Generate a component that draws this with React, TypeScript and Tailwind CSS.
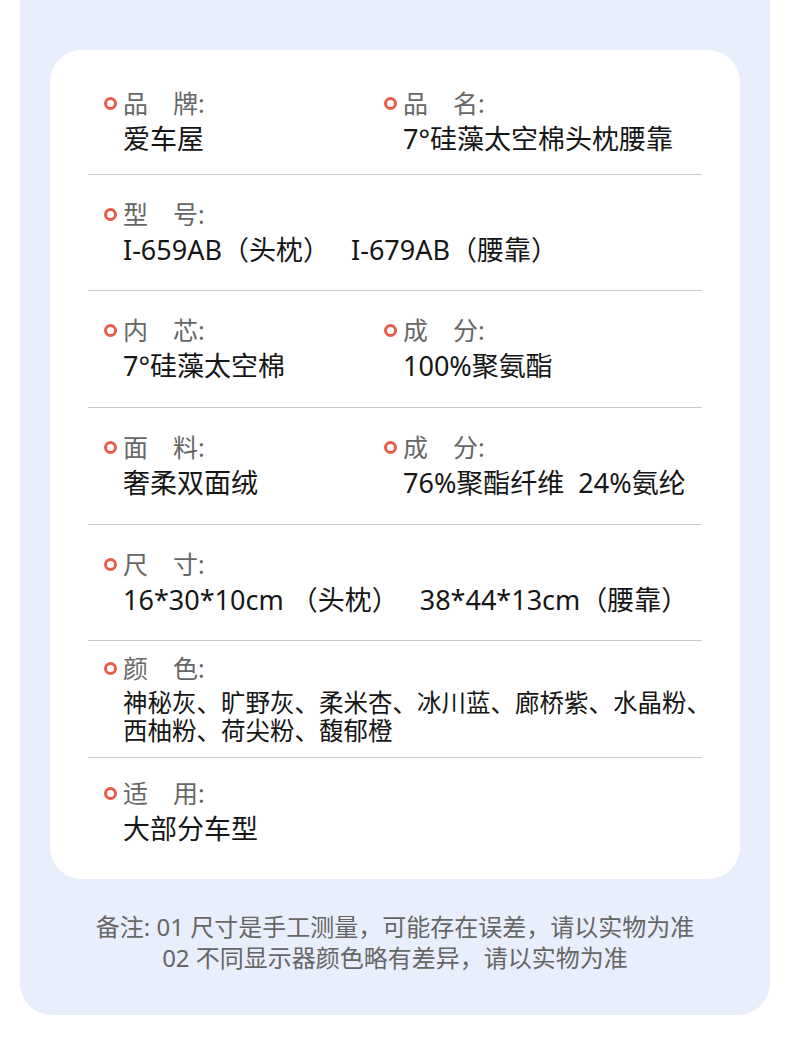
const Dot = () => (
  <span className="mr-[6px] inline-block h-[13px] w-[13px] shrink-0 rounded-full border-[3px] border-[#e95b49]" />
);

const Label = ({ text }: { text: string }) => (
  <div className="flex h-[32px] items-center text-[25px] leading-[32px] text-[#666666]">
    <Dot />
    <span>{text}</span>
  </div>
);

const Value = ({ children }: { children: React.ReactNode }) => (
  <div className="mt-[2px] pl-[19px] text-[27px] leading-[36px] text-[#161616] whitespace-pre">{children}</div>
);

type Field = { label: string; value: string };

const Row = ({ items, className }: { items: Field[]; className: string }) => (
  <div className={`grid grid-cols-[280px_1fr] border-b border-[#c9c9c9] pl-[16px] ${className}`}>
    {items.map((it) => (
      <div key={it.label} className={items.length === 1 ? "col-span-2" : ""}>
        <Label text={it.label} />
        <Value>{it.value}</Value>
      </div>
    ))}
  </div>
);

const App = () => {
  return (
    <div className="min-h-[1044px] bg-white" style={{ fontFamily: '"Noto Sans", "Noto Sans CJK SC", sans-serif' }}>
      <div className="mx-[20px] rounded-b-[32px] bg-[#e9eefc] pt-[50px] pb-[42px]">
        <div className="mx-[30px] rounded-[32px] bg-white px-[38px]">
          <Row
            className="pt-[37px] pb-[17px]"
            items={[
              { label: "品　牌:", value: "爱车屋" },
              { label: "品　名:", value: "7°硅藻太空棉头枕腰靠" },
            ]}
          />
          <Row className="pt-[23px] pb-[22px]" items={[{ label: "型　号:", value: "I-659AB（头枕）   I-679AB（腰靠）" }]} />
          <Row
            className="py-[23px]"
            items={[
              { label: "内　芯:", value: "7°硅藻太空棉" },
              { label: "成　分:", value: "100%聚氨酯" },
            ]}
          />
          <Row
            className="py-[23px]"
            items={[
              { label: "面　料:", value: "奢柔双面绒" },
              { label: "成　分:", value: "76%聚酯纤维  24%氨纶" },
            ]}
          />
          <Row className="pt-[23px] pb-[22px]" items={[{ label: "尺　寸:", value: "16*30*10cm （头枕）   38*44*13cm（腰靠）" }]} />
          <div className="border-b border-[#c9c9c9] pt-[11px] pb-[12px] pl-[16px]">
            <Label text="颜　色:" />
            <div className="mt-[5px] pl-[19px] text-[24.5px] leading-[28px] whitespace-nowrap text-[#161616]">
              <p>神秘灰、旷野灰、柔米杏、冰川蓝、廊桥紫、水晶粉、</p>
              <p>西柚粉、荷尖粉、馥郁橙</p>
            </div>
          </div>
          <div className="pt-[19px] pb-[32px] pl-[16px]">
            <Label text="适　用:" />
            <Value>大部分车型</Value>
          </div>
        </div>
        <div className="mt-[32px] text-center text-[24px] leading-[31px] text-[#666666]">
          <p>备注: 01 尺寸是手工测量，可能存在误差，请以实物为准</p>
          <p>02 不同显示器颜色略有差异，请以实物为准</p>
        </div>
      </div>
    </div>
  );
};

export default App;
